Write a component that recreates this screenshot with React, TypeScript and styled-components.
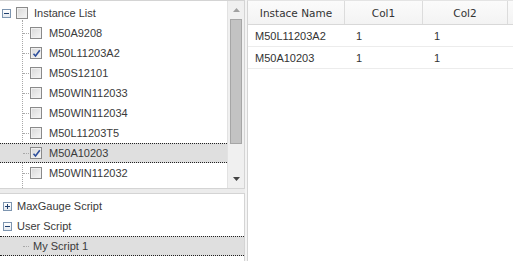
import React from "react";
import styled, { createGlobalStyle, css } from "styled-components";

const Global = createGlobalStyle`
  html, body { margin: 0; padding: 0; background: #ffffff; }
  body { font-family: "Liberation Sans", Arial, sans-serif; font-size: 11px; color: #333; }
`;

const Root = styled.div`
  display: flex;
  width: 513px;
  height: 261px;
  background: #ffffff;
  overflow: hidden;
`;

const LeftPane = styled.div`
  display: flex;
  flex-direction: column;
  width: 245px;
  flex: none;
`;

const TopPanel = styled.div`
  display: flex;
  height: 189px;
  flex: none;
  border: 1px solid #d4d4d4;
  border-left: none;
  box-sizing: border-box;
`;

const TreeArea = styled.div`
  flex: 1;
  position: relative;
  padding-top: 2px;
  overflow: hidden;
`;

const Splitter = styled.div`
  height: 4px;
  flex: none;
  background: #ececec;
`;

const BottomPanel = styled.div`
  flex: 1;
  border: 1px solid #d4d4d4;
  border-left: none;
  border-bottom: none;
  padding-top: 2px;
  position: relative;
`;

const Row = styled.div<{ $selected?: boolean; $indent: number }>`
  position: relative;
  display: flex;
  align-items: center;
  height: 20px;
  box-sizing: border-box;
  padding-left: ${(p) => p.$indent}px;
  white-space: nowrap;
  border-top: 1px solid transparent;
  border-bottom: 1px solid transparent;
  ${(p) =>
    p.$selected &&
    css`
      background: #dfdfdf;
      border-top: 1px dotted #222;
      border-bottom: 1px dotted #222;
    `}
`;

const Label = styled.span`
  color: #3a3a3a;
  font-size: 11px;
  line-height: 14px;
`;

const ExpandBox = styled.span`
  width: 7px;
  height: 7px;
  border: 1px solid #7d95b0;
  background: linear-gradient(#ffffff, #e4e9ef);
  position: relative;
  flex: none;
  &::before {
    content: "";
    position: absolute;
    left: 1px;
    top: 3px;
    width: 5px;
    height: 1px;
    background: #1f3f6e;
  }
`;

const PlusBox = styled(ExpandBox)`
  &::after {
    content: "";
    position: absolute;
    left: 3px;
    top: 1px;
    width: 1px;
    height: 5px;
    background: #1f3f6e;
  }
`;

const Check = styled.span`
  width: 10px;
  height: 10px;
  border: 1px solid #8a8a8a;
  background: linear-gradient(135deg, #d8d8d8, #f6f6f6);
  box-shadow: inset 0 0 0 1px #f0f0f0;
  flex: none;
  position: relative;
  display: flex;
  align-items: center;
  justify-content: center;
`;

const HStub = styled.span<{ $left: number; $width: number }>`
  position: absolute;
  left: ${(p) => p.$left}px;
  width: ${(p) => p.$width}px;
  top: 9px;
  border-top: 1px dotted #a8a8a8;
`;

const VGuide = styled.span<{ $left: number; $top: number; $bottom: number }>`
  position: absolute;
  left: ${(p) => p.$left}px;
  top: ${(p) => p.$top}px;
  bottom: ${(p) => p.$bottom}px;
  border-left: 1px dotted #a8a8a8;
`;

const Gap = styled.span<{ $w: number }>`
  width: ${(p) => p.$w}px;
  flex: none;
`;

const Scrollbar = styled.div`
  width: 16px;
  flex: none;
  background: #f0f0f0;
  border-left: 1px solid #e2e2e2;
  display: flex;
  flex-direction: column;
  align-items: center;
`;

const Arrow = styled.div`
  height: 18px;
  width: 100%;
  display: flex;
  align-items: center;
  justify-content: center;
`;

const Thumb = styled.div`
  width: 12px;
  height: 125px;
  box-sizing: border-box;
  background: #c3c3c3;
  border: 1px solid #a6a6a6;
`;

const Track = styled.div`
  flex: 1;
`;

const Divider = styled.div`
  width: 2px;
  flex: none;
  background: #f4f4f4;
`;

const RightPane = styled.div`
  flex: 1;
  border-left: 1px solid #d4d4d4;
  border-top: 1px solid #e4e4e4;
  display: flex;
  flex-direction: column;
`;

const HeaderRow = styled.div`
  display: flex;
  height: 23px;
  background: linear-gradient(#fbfbfb, #f3f3f3);
  border-bottom: 1px solid #d8d8d8;
`;

const HeaderCell = styled.div<{ $w: number; $last?: boolean }>`
  width: ${(p) => p.$w}px;
  flex: ${(p) => (p.$last ? 1 : "none")};
  box-sizing: border-box;
  border-right: ${(p) => (p.$last ? "none" : "1px solid #dcdcdc")};
  display: flex;
  align-items: center;
  justify-content: center;
  font-family: "DejaVu Sans", sans-serif;
  font-size: 10.5px;
  color: #333;
`;

const DataRow = styled.div`
  display: flex;
  height: 21px;
  border-bottom: 1px solid #ececec;
  align-items: center;
`;

const DataCell = styled.div<{ $w: number; $pad: number }>`
  width: ${(p) => p.$w}px;
  padding-left: ${(p) => p.$pad}px;
  box-sizing: border-box;
  flex: none;
  font-size: 11px;
  color: #333;
  white-space: nowrap;
`;

const CheckMark = () => (
  <svg width="9" height="9" viewBox="0 0 9 9">
    <path d="M1.5 4.8 L3.5 7 L7.8 1.2" fill="none" stroke="#2e4f9c" strokeWidth="1.6" />
  </svg>
);

const UpArrow = () => (
  <svg width="7" height="4" viewBox="0 0 7 4">
    <path d="M0 4 L3.5 0 L7 4 Z" fill="#a0a0a0" />
  </svg>
);

const DownArrow = () => (
  <svg width="7" height="4" viewBox="0 0 7 4">
    <path d="M0 0 L7 0 L3.5 4 Z" fill="#444" />
  </svg>
);

const instances = [
  { name: "M50A9208", checked: false },
  { name: "M50L11203A2", checked: true },
  { name: "M50S12101", checked: false },
  { name: "M50WIN112033", checked: false },
  { name: "M50WIN112034", checked: false },
  { name: "M50L11203T5", checked: false },
  { name: "M50A10203", checked: true, selected: true },
  { name: "M50WIN112032", checked: false },
];

const columns = [
  { title: "Instace Name", w: 97, pad: 7 },
  { title: "Col1", w: 78, pad: 11 },
  { title: "Col2", w: 85, pad: 11 },
];

const rows = [
  ["M50L11203A2", "1", "1"],
  ["M50A10203", "1", "1"],
];

export default function App() {
  return (
    <Root>
      <Global />
      <LeftPane>
        <TopPanel>
          <TreeArea>
            <VGuide $left={22} $top={19} $bottom={0} />
            <Row $indent={2}>
              <ExpandBox />
              <Gap $w={5} />
              <Check />
              <Gap $w={6} />
              <Label>Instance List</Label>
            </Row>
            {instances.map((it) => (
              <Row key={it.name} $indent={30} $selected={it.selected}>
                <HStub $left={23} $width={6} />
                <Check>{it.checked && <CheckMark />}</Check>
                <Gap $w={7} />
                <Label>{it.name}</Label>
              </Row>
            ))}
          </TreeArea>
          <Scrollbar>
            <Arrow>
              <UpArrow />
            </Arrow>
            <Thumb />
            <Track />
            <Arrow>
              <DownArrow />
            </Arrow>
          </Scrollbar>
        </TopPanel>
        <Splitter />
        <BottomPanel>
          <Row $indent={3}>
            <PlusBox />
            <Gap $w={5} />
            <Label>MaxGauge Script</Label>
          </Row>
          <Row $indent={3}>
            <ExpandBox />
            <Gap $w={5} />
            <Label>User Script</Label>
          </Row>
          <Row $indent={33} $selected>
            <HStub $left={23} $width={6} />
            <Label>My Script 1</Label>
          </Row>
        </BottomPanel>
      </LeftPane>
      <Divider />
      <RightPane>
        <HeaderRow>
          {columns.map((c) => (
            <HeaderCell key={c.title} $w={c.w}>
              {c.title}
            </HeaderCell>
          ))}
          <HeaderCell $w={5} $last />
        </HeaderRow>
        {rows.map((r) => (
          <DataRow key={r[0]}>
            {r.map((v, i) => (
              <DataCell key={i} $w={columns[i].w} $pad={columns[i].pad}>
                {v}
              </DataCell>
            ))}
          </DataRow>
        ))}
      </RightPane>
    </Root>
  );
}
